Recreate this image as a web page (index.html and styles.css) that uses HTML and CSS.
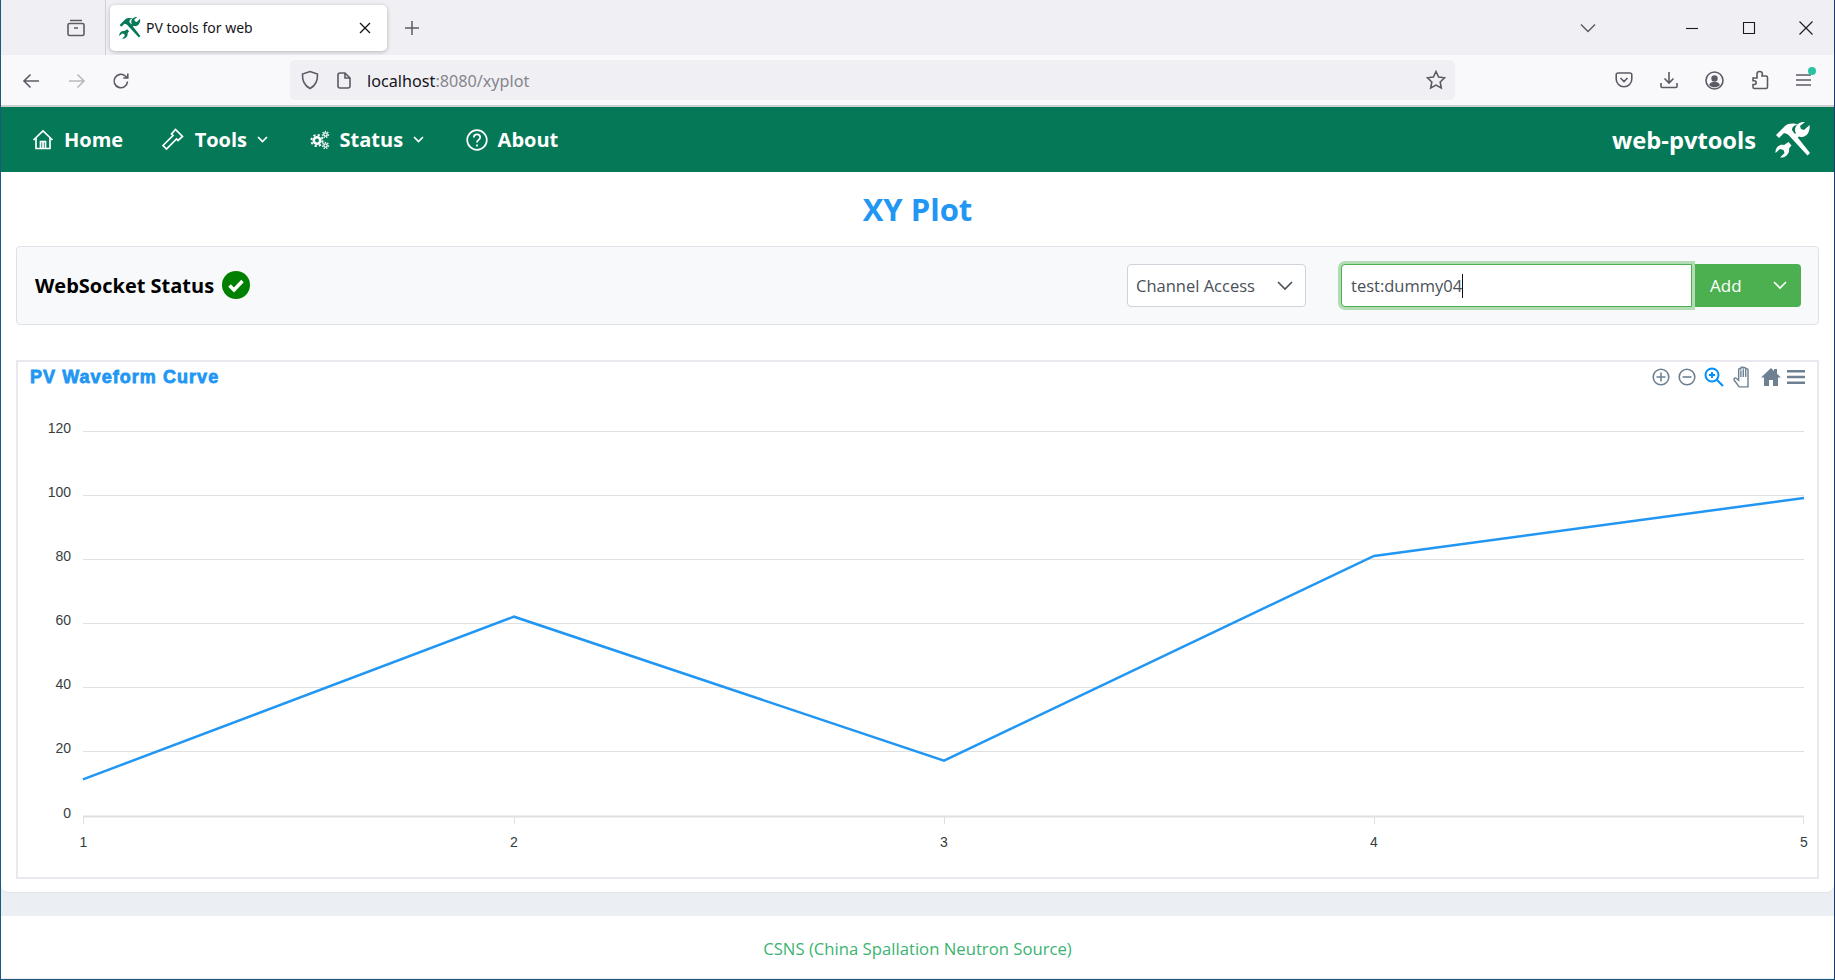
FILE: index.html
```html
<!DOCTYPE html>
<html lang="en">
<head>
  <meta charset="UTF-8" />
  <title>PV tools for web</title>
  <link rel="stylesheet" href="styles.css">
</head>
<body>
  <svg class="defs" width="0" height="0">
    <symbol id="tools" viewBox="0 0 36 36">
      <path d="M1 13 10 4C14 1 19 1 23 3 19 3 17 5 17 8L18 9.500 35 31 32.500 33.500 13.500 13 12 12 9 11 4 16z"/>
      <path d="M34.500 3 29 8 26 7 25 4 30 0C25-.5 20 3 20 8 20 9.500 20.500 10.500 21 11L17.500 14.500 20 17.500 24 14.500C25 15 26 15 27 15 32 15 35.500 9 34.500 3z"/>
      <path d="M13.500 20 9 23C4 22 0 26 .5 31L5 27 8.500 28 9.500 31 5 35.500C11 36 15 31 14 26.500L16.500 23.500z"/>
    </symbol>
  </svg>

  <div class="window">
    <div class="tabbar">
      <div class="tabs-side">
        <svg class="chrome-icon" width="20" height="20" viewBox="0 0 20 20"><path d="M4 2.500h12M3.500 5.500h13a1.500 1.500 0 0 1 1.500 1.500v9a1.500 1.500 0 0 1-1.500 1.500h-13A1.500 1.500 0 0 1 2 16V7a1.500 1.500 0 0 1 1.500-1.500zM8 10h4"/></svg>
      </div>
      <div class="tab">
        <svg class="tab-logo" width="22" height="22"><use href="#tools"/></svg>
        <span class="tab-title">PV tools for web</span>
        <svg class="tab-close" width="12" height="12" viewBox="0 0 12 12"><path d="M1 1l10 10M11 1 1 11"/></svg>
      </div>
      <svg class="new-tab" width="16" height="16" viewBox="0 0 16 16"><path d="M8 1v14M1 8h14"/></svg>
      <div class="tabbar-right">
        <svg class="list-tabs" width="18" height="10" viewBox="0 0 18 10"><path d="M2 1.500l7 7 7-7"/></svg>
        <div class="win-buttons">
          <svg width="14" height="14" viewBox="0 0 14 14"><path d="M1 7.500h12"/></svg>
          <svg width="14" height="14" viewBox="0 0 14 14"><path d="M1.500 1.500h11v11h-11z"/></svg>
          <svg width="14" height="14" viewBox="0 0 14 14"><path d="M.5.500l13 13M13.500.500l-13 13"/></svg>
        </div>
      </div>
    </div>

    <div class="toolbar">
      <div class="nav-buttons">
        <svg class="chrome-icon" width="18" height="16" viewBox="0 0 18 16"><path d="M17 8H2M8.500 1.500 2 8l6.500 6.500"/></svg>
        <svg class="chrome-icon faded" width="18" height="16" viewBox="0 0 18 16"><path d="M1 8h15M9.500 1.500 16 8l-6.500 6.500"/></svg>
        <svg class="chrome-icon reload" width="18" height="18" viewBox="0 0 18 18"><path d="M15.500 9.500a6.700 6.700 0 1 1-2-5.300L15.500 6M15.800 1.500V6h-4.500"/></svg>
      </div>
      <div class="urlbar">
        <svg class="chrome-icon" width="18" height="20" viewBox="0 0 18 20"><path d="M9 1.500 16.500 4c.3 6-1.500 11.500-7.500 14.500C3 15.500 1.200 10 1.500 4z"/></svg>
        <svg class="chrome-icon" width="14" height="17" viewBox="0 0 14 17"><path d="M3 1h5l5 5v8a2 2 0 0 1-2 2H3a2 2 0 0 1-2-2V3a2 2 0 0 1 2-2zM8 1v5h5"/></svg>
        <span class="url"><span class="url-host">localhost</span>:8080/xyplot</span>
        <svg class="chrome-icon star" width="20" height="20" viewBox="0 0 20 20"><path d="M10 1.500l2.600 5.500 6 .8-4.400 4.200 1.100 6L10 15.100 4.700 18l1.100-6L1.400 7.800l6-.8z"/></svg>
      </div>
      <div class="toolbar-right">
        <svg class="chrome-icon" width="18" height="18" viewBox="0 0 18 18"><path d="M3 2h12a1.800 1.800 0 0 1 1.800 1.800V8A7.800 7.800 0 0 1 1.200 8V3.800A1.800 1.800 0 0 1 3 2zM5.500 7 9 10.500 12.500 7"/></svg>
        <svg class="chrome-icon" width="18" height="18" viewBox="0 0 18 18"><path d="M9 1v11M4.500 7.500 9 12l4.500-4.500M1 12v3.500a1 1 0 0 0 1 1h14a1 1 0 0 0 1-1V12"/></svg>
        <svg class="chrome-icon" width="19" height="19" viewBox="0 0 19 19"><circle cx="9.500" cy="9.500" r="8.500"/><circle class="solid" cx="9.500" cy="7.500" r="3.200"/><path class="solid" d="M4 14c1-2.500 3-3 5.500-3s4.500.5 5.500 3c-1.500 1.500-3.500 2.300-5.500 2.300S5.500 15.500 4 14z"/></svg>
        <svg class="chrome-icon" width="18" height="20" viewBox="0 0 18 20"><path d="M2 8h4V4.500a2.700 2.700 0 0 1 5.400-.5L11 6h4a1.500 1.500 0 0 1 1.500 1.500V17a1.500 1.500 0 0 1-1.500 1.500H3.500A1.500 1.500 0 0 1 2 17v-2.500h1.300a1.900 1.900 0 0 0 0-3.800H2z"/></svg>
        <div class="menu-btn">
          <svg class="chrome-icon" width="16" height="14" viewBox="0 0 16 14"><path d="M0 2h15M0 7h15M0 12h15"/></svg>
          <span class="menu-dot"></span>
        </div>
      </div>
    </div>

    <nav class="topnav">
      <a class="nav-item">
        <svg width="22" height="22" viewBox="0 0 22 22"><path d="M1.500 11 11 2l9.500 9M4 9v10.500h14V9M8.500 19.500V12.500h5v7M11 12.500v7"/></svg>
        <span>Home</span>
      </a>
      <a class="nav-item">
        <svg width="24" height="24" viewBox="0 0 24 24"><path d="M3 19.500 13 9.500l-1.500-1.500 4-4.500 7 7-4.500 4-1.500-1.500L6.500 23l-3.500-3.500z" transform="translate(-1 -2)"/></svg>
        <span>Tools</span>
        <svg class="caret" width="11" height="7" viewBox="0 0 11 7"><path d="M1 1l4.500 4.500L10 1"/></svg>
      </a>
      <a class="nav-item">
        <svg width="20" height="20" viewBox="0 0 20 20">
          <circle class="gear-body" cx="7" cy="10.500" r="3.200"/>
          <circle class="gear-teeth" cx="7" cy="10.500" r="5.600"/>
          <circle class="cog-body" cx="15.500" cy="4.500" r="1.700"/>
          <circle class="cog-teeth" cx="15.500" cy="4.500" r="3"/>
          <circle class="cog-body" cx="15.500" cy="15.500" r="1.700"/>
          <circle class="cog-teeth" cx="15.500" cy="15.500" r="3"/>
        </svg>
        <span>Status</span>
        <svg class="caret" width="11" height="7" viewBox="0 0 11 7"><path d="M1 1l4.500 4.500L10 1"/></svg>
      </a>
      <a class="nav-item">
        <svg width="22" height="22" viewBox="0 0 22 22"><circle cx="11" cy="11" r="9.800"/><path d="M7.800 8.500c0-2 1.500-3.200 3.200-3.200s3.200 1.200 3.200 3c0 2.500-3.200 2.700-3.200 5.200M11 15.500v2"/></svg>
        <span>About</span>
      </a>
      <div class="brand">
        <span>web-pvtools</span>
        <svg class="brand-logo" width="36" height="36"><use href="#tools"/></svg>
      </div>
    </nav>

    <main class="content">
      <h1 class="page-title">XY Plot</h1>

      <div class="control-bar">
        <div class="ws-status">
          <span>WebSocket Status</span>
          <svg width="28" height="28" viewBox="0 0 28 28"><circle class="ok-disc" cx="14" cy="14" r="14"/><path class="ok-tick" d="M7.500 14.500l4.500 4.500 8.500-9"/></svg>
        </div>
        <div class="select-box">
          <span>Channel Access</span>
          <svg width="16" height="10" viewBox="0 0 16 10"><path d="M1 1l7 7 7-7"/></svg>
        </div>
        <div class="pv-group">
          <div class="pv-input">test:dummy04<span class="text-cursor"></span></div>
          <div class="add-btn">
            <span>Add</span>
            <svg width="14" height="9" viewBox="0 0 14 9"><path d="M1 1l6 6 6-6"/></svg>
          </div>
        </div>
      </div>

      <section class="chart-box">
        <div class="chart-head">
          <span class="chart-title">PV Waveform Curve</span>
          <div class="chart-tools">
            <svg width="18" height="18" viewBox="0 0 18 18"><circle cx="9" cy="9" r="7.800"/><path d="M9 4.500v9M4.500 9h9"/></svg>
            <svg width="18" height="18" viewBox="0 0 18 18"><circle cx="9" cy="9" r="7.800"/><path d="M4.500 9h9"/></svg>
            <svg class="tool-active" width="20" height="20" viewBox="0 0 20 20"><circle cx="8" cy="8" r="6.500"/><path d="M12.800 12.800 19 19M8 5v6M5 8h6"/></svg>
            <svg class="tool-hand" width="21" height="22" viewBox="0 0 18 20"><path d="M6 19 1.500 13c-1-1.500.8-2.800 2-1.700L5.500 13V3.500c0-1.600 2-1.600 2 0V2c0-1.500 2.200-1.500 2.200 0v.5c0-1.500 2.200-1.500 2.200 0V3.500c0-1.500 2.100-1.500 2.100 0V19zM7.500 4v6M9.700 3v7M11.900 3v7"/></svg>
            <svg class="tool-solid" width="22" height="20" viewBox="0 0 22 20"><path d="M11 1 1 10.500h3V19h5v-6h4v6h5v-8.500h3l-4-3.800V2h-3v2z"/></svg>
            <svg class="tool-solid tool-menu" width="20" height="16" viewBox="0 0 20 16"><path d="M1 1h18v2.400H1zM1 6.800h18v2.400H1zM1 12.600h18V15H1z"/></svg>
          </div>
        </div>
        <svg class="plot" width="1799" height="474" viewBox="0 0 1799 474">
          <g class="grid">
            <path d="M65 41.500H1786M65 105.500H1786M65 169.500H1786M65 233.500H1786M65 297.500H1786M65 361.500H1786"/>
          </g>
          <path class="axis" d="M65 426.500H1786"/>
          <path class="ticks" d="M65.500 427v7M496.500 427v7M926.500 427v7M1356.500 427v7M1785.500 427v7"/>
          <polyline class="series" points="65,389.400 496,226.700 926,370.700 1356,165.900 1786,108"/>
          <g class="y-labels">
            <text x="53" y="43">120</text>
            <text x="53" y="107">100</text>
            <text x="53" y="171">80</text>
            <text x="53" y="235">60</text>
            <text x="53" y="299">40</text>
            <text x="53" y="363">20</text>
            <text x="53" y="428">0</text>
          </g>
          <g class="x-labels">
            <text x="65.500" y="457">1</text>
            <text x="496" y="457">2</text>
            <text x="926" y="457">3</text>
            <text x="1356" y="457">4</text>
            <text x="1786" y="457">5</text>
          </g>
        </svg>
      </section>
    </main>

    <footer class="page-footer">CSNS (China Spallation Neutron Source)</footer>
  </div>
</body>
</html>
```

FILE: styles.css
```css
* {
  margin: 0;
  padding: 0;
  box-sizing: border-box;
}

html, body {
  height: 100%;
  overflow: hidden;
}

body {
  font-family: 'Open Sans', 'Noto Sans', sans-serif;
  background: #ebeef3;
}

.defs {
  position: absolute;
}

.window {
  height: 980px;
  display: flex;
  flex-direction: column;
  border-left: 1px solid #1a5a7c;
  border-right: 1px solid #1c3a66;
  border-bottom: 1px solid #1a5a7c;
  background: #ebeef3;
}

/* browser frame */
.tabbar {
  height: 55px;
  flex: none;
  display: flex;
  align-items: center;
  background: #f0f0f4;
}

.tabs-side {
  width: 105px;
  height: 55px;
  flex: none;
  display: flex;
  align-items: center;
  justify-content: flex-end;
  padding-right: 19px;
  border-right: 1px solid #cfcfd8;
}

.chrome-icon {
  flex: none;
  fill: none;
  stroke: #5b5b66;
  stroke-width: 1.6;
}

.chrome-icon .solid {
  fill: #5b5b66;
  stroke: none;
}

.chrome-icon.faded {
  stroke: #b8b8be;
}

.chrome-icon.reload {
  margin-left: -2px;
}

.tab {
  width: 277px;
  height: 46px;
  margin-left: 4px;
  display: flex;
  align-items: center;
  background: #fff;
  border-radius: 5px;
  box-shadow: 0 1px 4px rgba(0,0,0,0.25);
  padding: 0 16px 0 9px;
}

.tab-logo {
  fill: #057957;
  flex: none;
}

.tab-title {
  flex: 1;
  font-family: 'Noto Sans', sans-serif;
  font-size: 14px;
  margin-left: 5px;
  color: #15141a;
}

.tab-close {
  fill: none;
  stroke: #15141a;
  stroke-width: 1.3;
}

.new-tab {
  margin-left: 17px;
  fill: none;
  stroke: #5b5b66;
  stroke-width: 1.5;
}

.tabbar-right {
  margin-left: auto;
  display: flex;
  align-items: center;
}

.list-tabs {
  fill: none;
  stroke: #5b5b66;
  stroke-width: 1.5;
  margin-right: 88px;
}

.win-buttons {
  display: flex;
  gap: 43px;
  margin-right: 21px;
}

.win-buttons svg {
  fill: none;
  stroke: #1a1a1a;
  stroke-width: 1.1;
}

.toolbar {
  height: 52px;
  flex: none;
  display: flex;
  align-items: center;
  background: #f9f9fb;
  border-bottom: 2px solid #cfcfd2;
  padding-left: 21px;
}

.nav-buttons {
  display: flex;
  align-items: center;
  gap: 28px;
  width: 268px;
  padding-top: 2px;
}

.urlbar {
  width: 1165px;
  height: 40px;
  display: flex;
  align-items: center;
  gap: 18px;
  padding: 0 9px 0 11px;
  background: #f0f0f4;
  border-radius: 5px;
}

.url {
  flex: 1;
  margin-left: -2px;
  padding-top: 2px;
  font-family: 'Noto Sans', sans-serif;
  font-size: 16.2px;
  color: #85858c;
}

.url-host {
  color: #15141a;
}

.toolbar-right {
  display: flex;
  align-items: center;
  gap: 27px;
  margin-left: 160px;
}

.menu-btn {
  position: relative;
  display: flex;
}

.menu-dot {
  position: absolute;
  top: -6px;
  right: -4px;
  width: 8px;
  height: 8px;
  border-radius: 50%;
  background: #2ac3a2;
}

/* app nav */
.topnav {
  height: 65px;
  flex: none;
  display: flex;
  align-items: center;
  background: #057957;
  color: #fff;
  padding-left: 31px;
  padding-right: 23px;
  gap: 37.5px;
}

.nav-item {
  display: flex;
  align-items: center;
  gap: 10px;
  font-size: 20px;
  font-weight: 700;
}

.nav-item svg {
  fill: none;
  stroke: #fff;
  stroke-width: 1.7;
}

.nav-item svg .gear-body {
  stroke-width: 2.6;
}

.nav-item svg .gear-teeth {
  stroke-width: 2;
  stroke-dasharray: 2.2 2.200;
}

.nav-item svg .cog-body {
  stroke-width: 1.3;
}

.nav-item svg .cog-teeth {
  stroke-width: 1.3;
  stroke-dasharray: 1.300 1.300;
}

.nav-item .caret {
  margin-right: 4px;
}

.brand {
  margin-left: auto;
  display: flex;
  align-items: center;
  gap: 19px;
  font-size: 23.7px;
  font-weight: 700;
}

.brand-logo {
  fill: #fff;
}

/* page */
.content {
  height: 721px;
  flex: none;
  background: #fff;
  border-bottom: 1px solid #e2e5ea;
  border-radius: 0 0 8px 8px;
  padding: 0 15px;
}

.page-title {
  height: 74px;
  display: flex;
  align-items: center;
  justify-content: center;
  font-size: 31px;
  font-weight: 700;
  color: #2196f3;
}

.control-bar {
  height: 79px;
  display: flex;
  align-items: center;
  background: #f8f9fa;
  border: 1px solid #dee2e6;
  border-radius: 4px;
  padding: 0 17px 0 18px;
}

.ws-status {
  display: flex;
  align-items: center;
  gap: 8px;
  font-size: 20px;
  font-weight: 700;
  color: #000;
  margin-right: auto;
}

.ws-status svg {
  margin-top: -2px;
}

.ok-disc {
  fill: #008000;
}

.ok-tick {
  fill: none;
  stroke: #fff;
  stroke-width: 3.500;
}

.select-box {
  width: 179px;
  height: 43px;
  display: flex;
  align-items: center;
  justify-content: space-between;
  padding: 0 12px 0 8px;
  background: #fff;
  border: 1px solid #ced4da;
  border-radius: 4px;
  font-size: 16.5px;
  color: #495057;
}

.select-box svg {
  fill: none;
  stroke: #495057;
  stroke-width: 1.6;
}

.pv-group {
  display: flex;
  margin-left: 35px;
}

.pv-input {
  width: 351px;
  height: 43px;
  display: flex;
  align-items: center;
  padding-left: 9px;
  background: #fff;
  border: 1px solid #4caf50;
  border-radius: 4px 0 0 4px;
  box-shadow: 0 0 0 3px #b3dcb5;
  font-size: 16.5px;
  color: #495057;
}

.text-cursor {
  width: 1px;
  height: 24px;
  background: #111;
}

.add-btn {
  width: 106px;
  height: 43px;
  margin-left: 3px;
  display: flex;
  align-items: center;
  justify-content: space-between;
  padding: 0 14px 0 15px;
  background: #4caf50;
  border-radius: 0 4px 4px 0;
  color: #fff;
  font-size: 17px;
}

.add-btn svg {
  fill: none;
  stroke: #fff;
  stroke-width: 1.6;
}

.chart-box {
  height: 519px;
  margin-top: 35px;
  border: 2px solid #e8e8ee;
}

.chart-head {
  height: 26px;
  display: flex;
  align-items: center;
  justify-content: space-between;
  padding: 0 11px 0 12px;
  margin-top: 2px;
}

.chart-title {
  font-family: 'Liberation Sans', Arial, sans-serif;
  font-size: 18px;
  font-weight: 700;
  letter-spacing: 1.05px;
  color: #2196f3;
  -webkit-text-stroke: 0.8px #2196f3;
}

.chart-tools {
  display: flex;
  align-items: center;
  gap: 8px;
}

.chart-tools svg {
  fill: none;
  stroke: #6e8192;
  stroke-width: 1.600;
}

.chart-tools .tool-active {
  stroke: #008ffb;
  stroke-width: 2;
}

.chart-tools .tool-hand {
  stroke: #6e8192;
  stroke-width: 1.300;
  margin-right: -1px;
}

.chart-tools .tool-solid {
  fill: #6e8192;
  stroke: none;
}

.chart-tools .tool-menu {
  margin-left: -4px;
}

.plot {
  display: block;
}

.grid path {
  fill: none;
  stroke: #e0e0e0;
  stroke-width: 1;
}

.axis {
  stroke: #e0e0e0;
  stroke-width: 2;
}

.ticks {
  fill: none;
  stroke: #e0e0e0;
  stroke-width: 1;
}

.series {
  fill: none;
  stroke: #2196f3;
  stroke-width: 2.500;
}

.plot text {
  font-family: 'Liberation Sans', Arial, sans-serif;
  font-size: 14px;
  fill: #373d3f;
}

.y-labels text {
  text-anchor: end;
}

.x-labels text {
  text-anchor: middle;
}

.page-footer {
  height: 62px;
  flex: none;
  margin-top: 23px;
  padding-top: 2px;
  display: flex;
  align-items: center;
  justify-content: center;
  background: #fff;
  color: #3cb371;
  font-size: 16.7px;
}
```
